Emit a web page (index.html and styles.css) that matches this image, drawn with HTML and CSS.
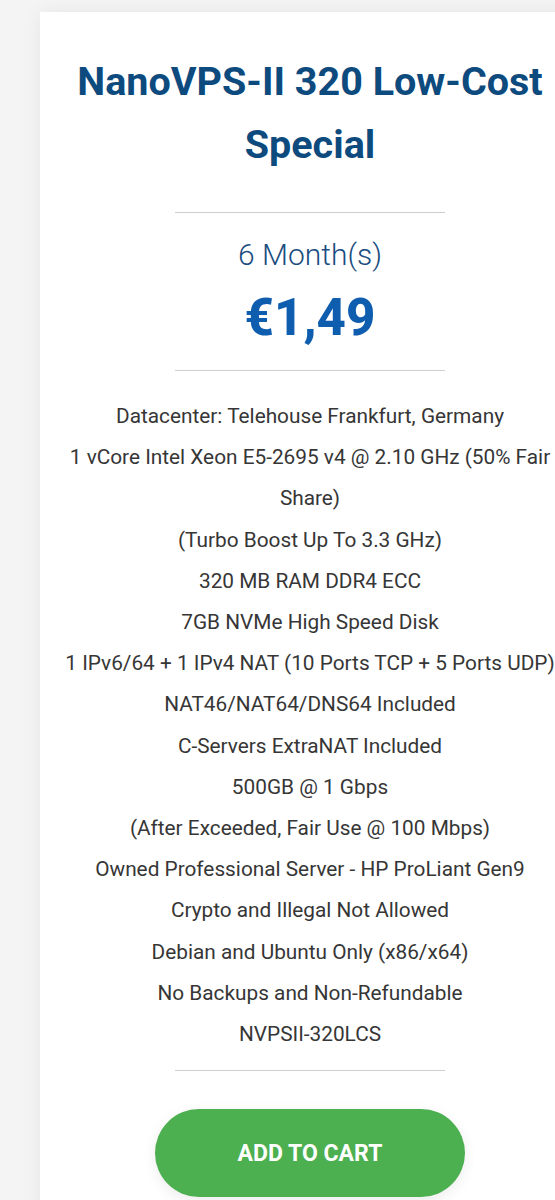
FILE: index.html
```html
<!DOCTYPE html>
<html lang="en">
<head>
<meta charset="utf-8">
<title>NanoVPS-II 320 Low-Cost Special</title>
<link rel="stylesheet" href="styles.css">
</head>
<body>
<div class="page">
  <div class="card">
    <h1 class="title">NanoVPS-II 320 Low-Cost Special</h1>
    <hr class="divider">
    <div class="cycle">6 Month(s)</div>
    <div class="price">€1,49</div>
    <hr class="divider">
    <ul class="features">
      <li>Datacenter: Telehouse Frankfurt, Germany</li>
      <li>1 vCore Intel Xeon E5-2695 v4 @ 2.10 GHz (50% Fair Share)</li>
      <li>(Turbo Boost Up To 3.3 GHz)</li>
      <li>320 MB RAM DDR4 ECC</li>
      <li>7GB NVMe High Speed Disk</li>
      <li>1 IPv6/64 + 1 IPv4 NAT (10 Ports TCP + 5 Ports UDP)</li>
      <li>NAT46/NAT64/DNS64 Included</li>
      <li>C-Servers ExtraNAT Included</li>
      <li>500GB @ 1 Gbps</li>
      <li>(After Exceeded, Fair Use @ 100 Mbps)</li>
      <li>Owned Professional Server - HP ProLiant Gen9</li>
      <li>Crypto and Illegal Not Allowed</li>
      <li>Debian and Ubuntu Only (x86/x64)</li>
      <li>No Backups and Non-Refundable</li>
      <li>NVPSII-320LCS</li>
    </ul>
    <hr class="divider">
    <a class="cart" href="#">ADD TO CART</a>
  </div>
</div>
</body>
</html>
```
FILE: styles.css
```css
html, body {
  margin: 0;
  padding: 0;
}
body {
  background: #f4f4f4;
  font-family: Roboto, "Liberation Sans", sans-serif;
  overflow-x: hidden;
}
.page {
  padding: 12px 0 0 40px;
}
.card {
  width: 540px;
  box-sizing: border-box;
  background: #ffffff;
  padding: 38px 25px 40px;
  display: flex;
  flex-direction: column;
  align-items: center;
  text-align: center;
  box-shadow: 0 0 18px rgba(0, 0, 0, 0.06);
}
.title {
  margin: 0;
  font-size: 39.5px;
  line-height: 63px;
  font-weight: 700;
  color: #0d4a7e;
}
.divider {
  width: 270px;
  border: 0;
  border-top: 1px solid #cfcfcf;
  margin: 0;
}
.card > .divider:nth-of-type(1) {
  margin-top: 36px;
}
.cycle {
  margin-top: 22px;
  font-size: 30px;
  line-height: 40px;
  color: #1a4d80;
  font-weight: 300;
}
.price {
  margin-top: 13px;
  font-size: 51px;
  line-height: 60px;
  font-weight: 800;
  color: #0e5daf;
}
.price + .divider {
  margin-top: 22px;
}
.features {
  list-style: none;
  margin: 25px 0 0;
  padding: 0;
  font-size: 20.8px;
  line-height: 41.2px;
  color: #363636;
}
.features + .divider {
  margin-top: 15px;
}
.cart {
  margin-top: 38px;
  width: 310px;
  height: 88px;
  border-radius: 44px;
  background: #4caf50;
  color: #ffffff;
  font-size: 23px;
  font-weight: 700;
  text-decoration: none;
  display: flex;
  align-items: center;
  justify-content: center;
  box-shadow: 0 4px 14px rgba(0, 0, 0, 0.08);
}
```
